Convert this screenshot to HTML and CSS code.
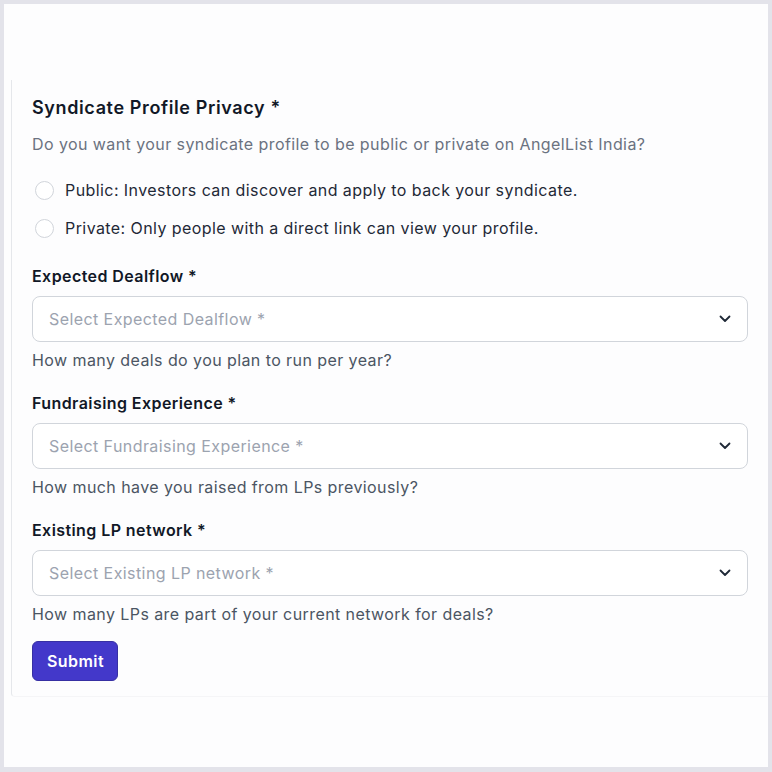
FILE: index.html
```html
<!DOCTYPE html>
<html>
<head>
<meta charset="utf-8">
<link rel="stylesheet" href="styles.css">
</head>
<body>
<div class="frame">
  <div class="page">
    <form class="panel">
      <h2 class="title">Syndicate Profile Privacy *</h2>
      <p class="desc">Do you want your syndicate profile to be public or private on AngelList India?</p>
      <div class="radios">
        <label class="radio"><span class="dot"></span>Public: Investors can discover and apply to back your syndicate.</label>
        <label class="radio"><span class="dot"></span>Private: Only people with a direct link can view your profile.</label>
      </div>
      <div class="field">
        <div class="label">Expected Dealflow *</div>
        <div class="select"><span>Select Expected Dealflow *</span><svg class="chev" viewBox="0 0 12 8" width="12" height="8"><path d="M1.5 1.5 L6 6 L10.5 1.5" fill="none" stroke="#1f2937" stroke-width="1.8" stroke-linecap="round" stroke-linejoin="round"/></svg></div>
        <div class="help">How many deals do you plan to run per year?</div>
      </div>
      <div class="field">
        <div class="label">Fundraising Experience *</div>
        <div class="select"><span>Select Fundraising Experience *</span><svg class="chev" viewBox="0 0 12 8" width="12" height="8"><path d="M1.5 1.5 L6 6 L10.5 1.5" fill="none" stroke="#1f2937" stroke-width="1.8" stroke-linecap="round" stroke-linejoin="round"/></svg></div>
        <div class="help">How much have you raised from LPs previously?</div>
      </div>
      <div class="field">
        <div class="label">Existing LP network *</div>
        <div class="select"><span>Select Existing LP network *</span><svg class="chev" viewBox="0 0 12 8" width="12" height="8"><path d="M1.5 1.5 L6 6 L10.5 1.5" fill="none" stroke="#1f2937" stroke-width="1.8" stroke-linecap="round" stroke-linejoin="round"/></svg></div>
        <div class="help">How many LPs are part of your current network for deals?</div>
      </div>
      <button type="button" class="submit">Submit</button>
    </form>
  </div>
</div>
</body>
</html>
```
FILE: styles.css
```css
* { box-sizing: border-box; }
html, body { margin: 0; padding: 0; }
body {
  background: #e3e3ea;
  font-family: Inter, "Noto Sans", sans-serif;
  color: #111827;
  letter-spacing: 0.42px;
}
.frame {
  width: 772px;
  height: 772px;
  padding: 4px 4px 5px 4px;
}
.page {
  background: #fdfdfe;
  height: 100%;
  padding-top: 76px;
  padding-left: 7px;
}
.panel {
  border-left: 1px solid #e5e7eb;
  border-bottom: 1px solid #f5f5f7;
  border-bottom-left-radius: 4px;
  padding: 14px 20px 15px 20px;
  display: flex;
  flex-direction: column;
  align-items: flex-start;
}
.title {
  margin: 0;
  font-size: 18px;
  line-height: 28px;
  font-weight: 600;
  letter-spacing: 0.62px;
  color: #111827;
}
.desc {
  margin: 10px 0 0 0;
  font-size: 16px;
  line-height: 24px;
  color: #6b7280;
}
.radios {
  margin-top: 22px;
  display: flex;
  flex-direction: column;
  gap: 14px;
}
.radio {
  display: flex;
  align-items: center;
  gap: 11px;
  font-size: 16px;
  line-height: 24px;
  color: #1f2937;
}
.dot {
  width: 19px;
  height: 19px;
  border-radius: 50%;
  border: 1px solid #d1d5db;
  background: #fff;
  margin-left: 3px;
}
.field {
  width: 100%;
  display: flex;
  flex-direction: column;
  margin-top: 24px;
}
.field + .field { margin-top: 19px; }
.label {
  font-size: 16px;
  line-height: 24px;
  font-weight: 600;
  color: #111827;
}
.select {
  margin-top: 8px;
  height: 46px;
  border: 1px solid #d1d5db;
  border-radius: 8px;
  background: #fff;
  display: flex;
  align-items: center;
  justify-content: space-between;
  padding: 0 16px 0 16px;
  font-size: 16px;
  color: #9ca3af;
}
.chev { display: block; }
.help {
  margin-top: 6px;
  font-size: 16px;
  line-height: 24px;
  color: #4b5563;
}
.submit {
  margin-top: 15px;
  height: 40px;
  padding: 0 13px 0 14px;
  background: #4338ca;
  color: #fff;
  border: 1px solid #3730a3;
  border-radius: 6px;
  font-family: inherit;
  font-size: 16px;
  font-weight: 600;
  letter-spacing: 0.42px;
}
```
